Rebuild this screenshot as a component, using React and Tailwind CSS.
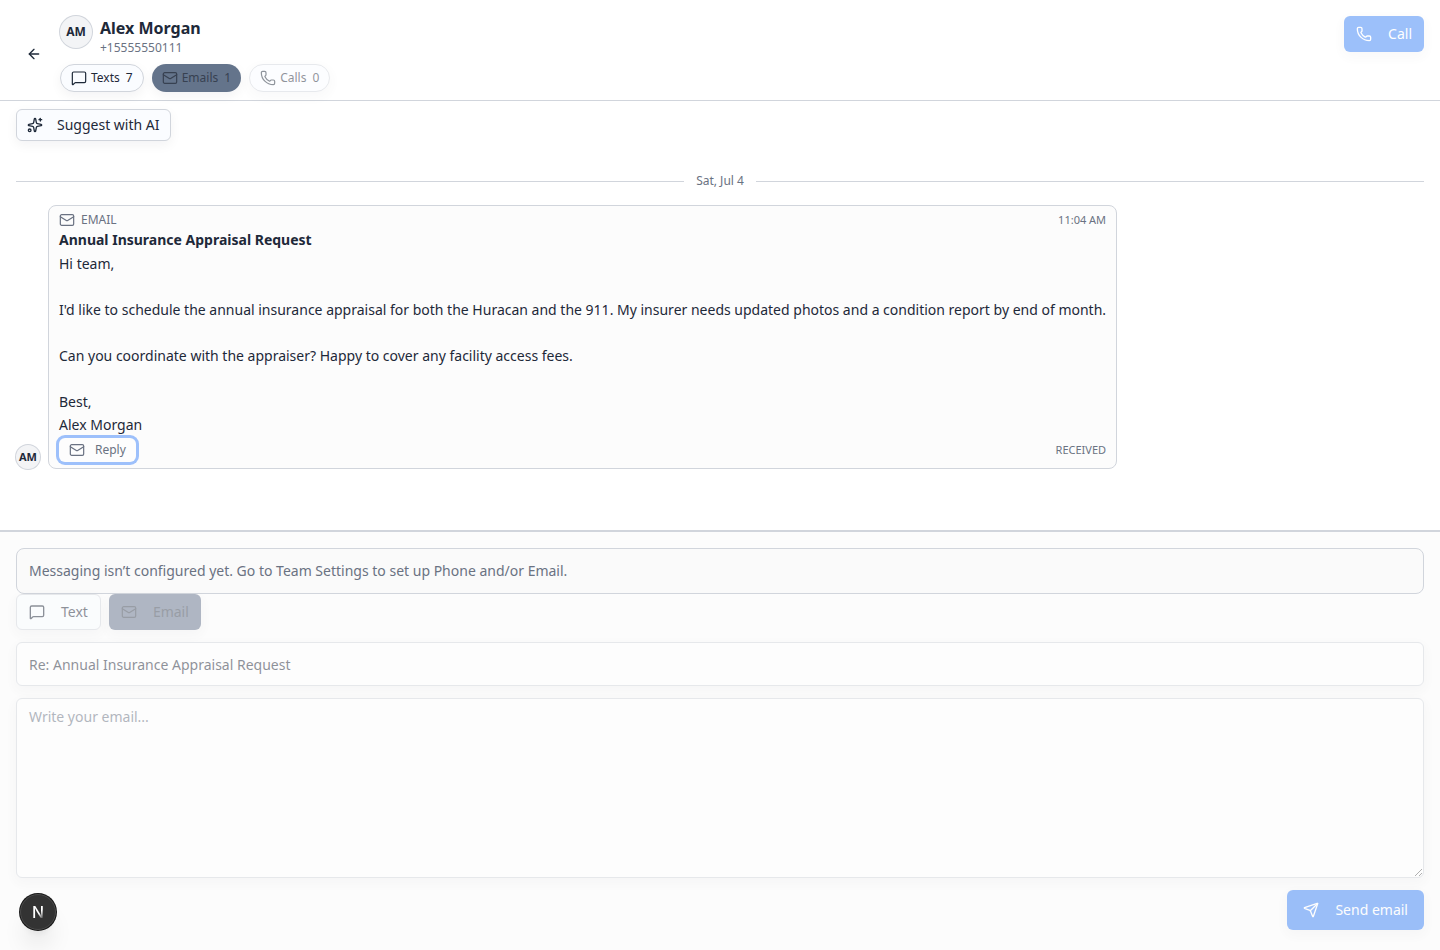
import { useState } from 'react'
import { ArrowLeft, Mail, MessageSquare, Phone, Send, Sparkles } from 'lucide-react'
import clsx from 'clsx'

const SOFT_SHADOW = 'shadow-[0_4px_12px_rgba(15,23,42,0.05)]'

const CHANNELS = [
  { label: 'Texts', count: 7, icon: MessageSquare, style: 'border border-gray-300 bg-[#fafcff] px-[10px]' },
  { label: 'Emails', count: 1, icon: Mail, style: 'bg-[#64748b] px-[10px] text-[#374151]' },
  {
    label: 'Calls',
    count: 0,
    icon: Phone,
    style: 'border border-gray-300 bg-[#fafcff] px-[10px] opacity-50',
    disabled: true,
  },
]

const EMAIL = {
  subject: 'Annual Insurance Appraisal Request',
  time: '11:04 AM',
  body: `Hi team,

I'd like to schedule the annual insurance appraisal for both the Huracan and the 911. My insurer needs updated photos and a condition report by end of month.

Can you coordinate with the appraiser? Happy to cover any facility access fees.

Best,
Alex Morgan`,
}

function Avatar({ className }) {
  return (
    <div
      className={clsx(
        'flex shrink-0 items-center justify-center rounded-full bg-gray-100 font-bold ring-1 ring-gray-300',
        className
      )}
    >
      AM
    </div>
  )
}

function Header() {
  return (
    <header className="flex items-center gap-2 border-b border-gray-300 px-4 pt-4 pb-2">
      <button type="button" aria-label="Back" className="flex size-9 shrink-0 items-center justify-center rounded-md">
        <ArrowLeft className="size-4" />
      </button>

      <div className="min-w-0 flex-1">
        <div className="flex h-8 items-center gap-2">
          <Avatar className="size-8 text-xs" />
          <div className="pt-3">
            <h1 className="text-base leading-5 font-bold">Alex Morgan</h1>
            <p className="text-xs leading-5 text-gray-500">+15555550111</p>
          </div>
        </div>

        <div className="mt-4 flex flex-wrap gap-2">
          {CHANNELS.map(({ label, count, icon: Icon, style, disabled }) => (
            <button
              key={label}
              type="button"
              disabled={disabled}
              className={clsx('flex h-7 items-center gap-1 rounded-full text-xs', SOFT_SHADOW, style)}
            >
              <Icon className="size-4" strokeWidth={1.8} />
              <span>{label}</span>
              <span className="ml-0.5">{count}</span>
            </button>
          ))}
        </div>
      </div>

      <button
        type="button"
        disabled
        className={clsx(
          'flex h-9 items-center gap-4 self-start rounded-md bg-[#3b82f6] px-3 text-sm text-white opacity-50',
          SOFT_SHADOW
        )}
      >
        <Phone className="size-4" />
        Call
      </button>
    </header>
  )
}

function EmailCard() {
  return (
    <article className="rounded-lg border border-gray-300 bg-[#fcfcfc] px-[10px] py-1.5">
      <div className="flex items-center justify-between text-gray-500">
        <div className="flex items-center gap-1.5 text-xs">
          <Mail className="size-4" strokeWidth={1.8} />
          <span>EMAIL</span>
        </div>
        <time className="text-[11px] leading-4">{EMAIL.time}</time>
      </div>
      <h2 className="mt-0.5 text-sm font-bold">{EMAIL.subject}</h2>
      <p className="mt-0.5 text-sm leading-[23px] whitespace-pre-wrap">{EMAIL.body}</p>
      <div className="mt-0.5 flex items-center justify-between text-gray-500">
        <button
          type="button"
          className="flex h-6 items-center gap-[10px] rounded-md bg-[#fdfdfd] px-[10px] text-xs ring-3 ring-[#9dc0fb]"
        >
          <Mail className="size-4" strokeWidth={1.8} />
          Reply
        </button>
        <span className="text-[11px] leading-4">RECEIVED</span>
      </div>
    </article>
  )
}

function Composer() {
  const [subject, setSubject] = useState(`Re: ${EMAIL.subject}`)
  const [body, setBody] = useState('')

  return (
    <form className="border-t-2 border-gray-300 bg-[#fcfcfc] px-4 pt-4 pb-5" onSubmit={(e) => e.preventDefault()}>
      <p className="rounded-lg border border-gray-300 bg-[#fafafa] px-3 py-3 text-sm text-gray-500">
        Messaging isn’t configured yet. Go to Team Settings to set up Phone and/or Email.
      </p>

      <div className="flex gap-2">
        <button
          type="button"
          disabled
          className={clsx(
            'flex h-9 items-center gap-4 rounded-md border border-gray-300 bg-[#fafcff] px-3 text-sm opacity-50',
            SOFT_SHADOW
          )}
        >
          <MessageSquare className="size-4" />
          Text
        </button>
        <button
          type="button"
          disabled
          className={clsx(
            'flex h-9 items-center gap-4 rounded-md bg-[#64728b] px-3 text-sm text-[#374151] opacity-50',
            SOFT_SHADOW
          )}
        >
          <Mail className="size-4" strokeWidth={1.8} />
          Email
        </button>
      </div>

      <input
        type="text"
        aria-label="Subject"
        disabled
        value={subject}
        onChange={(e) => setSubject(e.target.value)}
        className={clsx(
          'mt-3 block h-11 w-full rounded-md border border-gray-300 bg-white px-3 text-sm opacity-50',
          SOFT_SHADOW
        )}
      />
      <textarea
        aria-label="Email body"
        disabled
        placeholder="Write your email..."
        value={body}
        onChange={(e) => setBody(e.target.value)}
        className={clsx(
          'mt-3 block h-[180px] w-full rounded-md border border-gray-300 bg-white px-3 py-2 text-sm opacity-50 placeholder:text-gray-500',
          SOFT_SHADOW
        )}
      />

      <div className="mt-3 flex justify-end">
        <button
          type="submit"
          disabled
          className={clsx(
            'flex h-10 items-center gap-4 rounded-md bg-[#3b82f6] px-4 text-sm text-white opacity-50',
            SOFT_SHADOW
          )}
        >
          <Send className="size-4" />
          Send email
        </button>
      </div>
    </form>
  )
}

export default function App() {
  return (
    <div className="flex min-h-screen flex-col bg-white font-['Noto_Sans',sans-serif] text-gray-800">
      <Header />

      <main className="flex-1 px-4 pt-2">
        <button
          type="button"
          className={clsx(
            'flex h-8 items-center gap-3.5 rounded-md border border-gray-300 bg-[#fafcff] px-[10px] text-sm',
            SOFT_SHADOW
          )}
        >
          <Sparkles className="size-4" />
          Suggest with AI
        </button>

        {/* Day separator */}
        <div className="mt-8 flex items-center gap-3 text-xs text-gray-500">
          <div className="h-px flex-1 bg-gray-300" />
          <span>Sat, Jul 4</span>
          <div className="h-px flex-1 bg-gray-300" />
        </div>

        <div className="mt-4 flex items-end gap-2 pr-12">
          <Avatar className="size-6 text-[11px]" />
          <EmailCard />
        </div>
      </main>

      <Composer />

      {/* Dev tools badge */}
      <button
        type="button"
        aria-label="Open Next.js Dev Tools"
        className="fixed bottom-5 left-5 flex size-9 items-center justify-center rounded-full border border-[#4a4a4a] bg-[#333] shadow-xl ring-1 ring-[#171717]"
      >
        <span className="bg-linear-to-br from-white from-60% to-white/10 to-90% bg-clip-text font-['Inter',sans-serif] text-base leading-4 font-medium text-transparent">
          N
        </span>
      </button>
    </div>
  )
}
